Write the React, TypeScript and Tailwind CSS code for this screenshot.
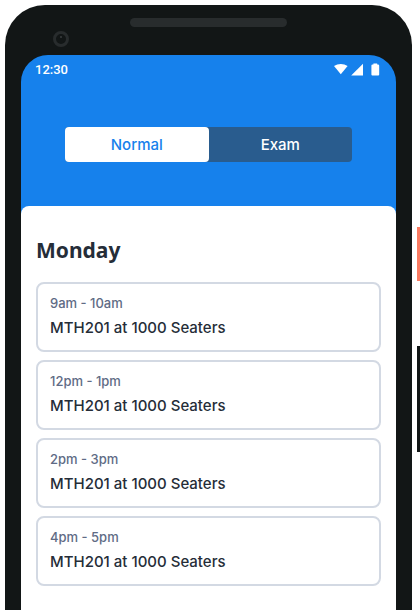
import { useState } from "react";

type Lesson = { time: string; title: string };

const normalTimetable: Lesson[] = [
  { time: "9am - 10am", title: "MTH201 at 1000 Seaters" },
  { time: "12pm - 1pm", title: "MTH201 at 1000 Seaters" },
  { time: "2pm - 3pm", title: "MTH201 at 1000 Seaters" },
  { time: "4pm - 5pm", title: "MTH201 at 1000 Seaters" },
];

function StatusIcons() {
  return (
    <svg width="46" height="14" viewBox="0 0 46 14" fill="#fff" aria-hidden="true">
      <path d="M0 3C4 .2 9.6.2 13.6 3L6.8 11.2Z" />
      <path d="M29 .8v11.8H17.2Z" />
      <path d="M38.6 1.4H39.4V.4H43.2V1.4H44a1.2 1.2 0 0 1 1.2 1.2v9a1 1 0 0 1-1 1h-5.8a1 1 0 0 1-1-1v-9a1.2 1.2 0 0 1 1.2-1.2Z" />
    </svg>
  );
}

function StatusBar() {
  return (
    <div className="flex h-[30px] items-center justify-between pr-4 pl-[14px] text-white">
      <span className="font-['Roboto',sans-serif] text-[13px] leading-4 font-medium">12:30</span>
      <StatusIcons />
    </div>
  );
}

function Phone({ children }: { children: React.ReactNode }) {
  return (
    <div className="flex min-w-0 flex-1 flex-col rounded-t-[40px] bg-[#121616] px-4">
      <div className="relative flex h-[50px] shrink-0 items-start justify-center pt-[13px]">
        <div className="h-[9px] w-[157px] rounded-full bg-[#282c2d]" />
        <div className="absolute top-[26px] left-8 size-4 rounded-full border-3 border-[#282c2d]">
          <div className="mx-auto mt-[2px] size-[2px] rounded-full bg-[#3a3e3f]" />
        </div>
      </div>
      <div className="flex flex-1 flex-col overflow-hidden rounded-t-[27px] bg-[#1681ec]">{children}</div>
    </div>
  );
}

export default function App() {
  const [tab, setTab] = useState("Normal");
  return (
    <div className="flex min-h-screen gap-[5px] overflow-hidden bg-white pt-[5px] pl-[5px] font-['Inter',sans-serif]">
      <Phone>
        <StatusBar />
        <div className="mx-11 mt-[42px] flex h-[35px] rounded bg-[#295c8e]">
          {["Normal", "Exam"].map((name) => (
            <button
              key={name}
              type="button"
              aria-pressed={tab === name}
              onClick={() => setTab(name)}
              className={
                tab === name
                  ? "flex-1 rounded bg-white text-[15px] leading-5 font-medium text-[#1681ec]"
                  : "flex-1 rounded text-[15px] leading-5 font-medium text-white"
              }
            >
              {name}
            </button>
          ))}
        </div>
        <main className="mt-11 flex-1 rounded-t-lg bg-white px-[15px] pt-7">
          <h1 className="font-['Noto_Sans',sans-serif] text-[21px] leading-8 font-bold text-[#252d38]">Monday</h1>
          <ul className="mt-4 flex flex-col gap-2">
            {normalTimetable.map((lesson) => (
              <li key={lesson.time} className="rounded-lg border-2 border-[#d3d9e3] px-3 pt-[11px] pb-3">
                <p className="text-[13px] leading-4 font-medium text-[#606b85]">{lesson.time}</p>
                <p className="mt-[7px] text-[15px] leading-5 font-medium text-[#252d38]">{lesson.title}</p>
              </li>
            ))}
          </ul>
        </main>
      </Phone>
      <div className="flex w-[3px] flex-col pt-[222px]">
        <div className="h-[54px] bg-[#fa7b62]" />
        <div className="mt-[65px] h-[106px] bg-[#121616]" />
      </div>
    </div>
  );
}
